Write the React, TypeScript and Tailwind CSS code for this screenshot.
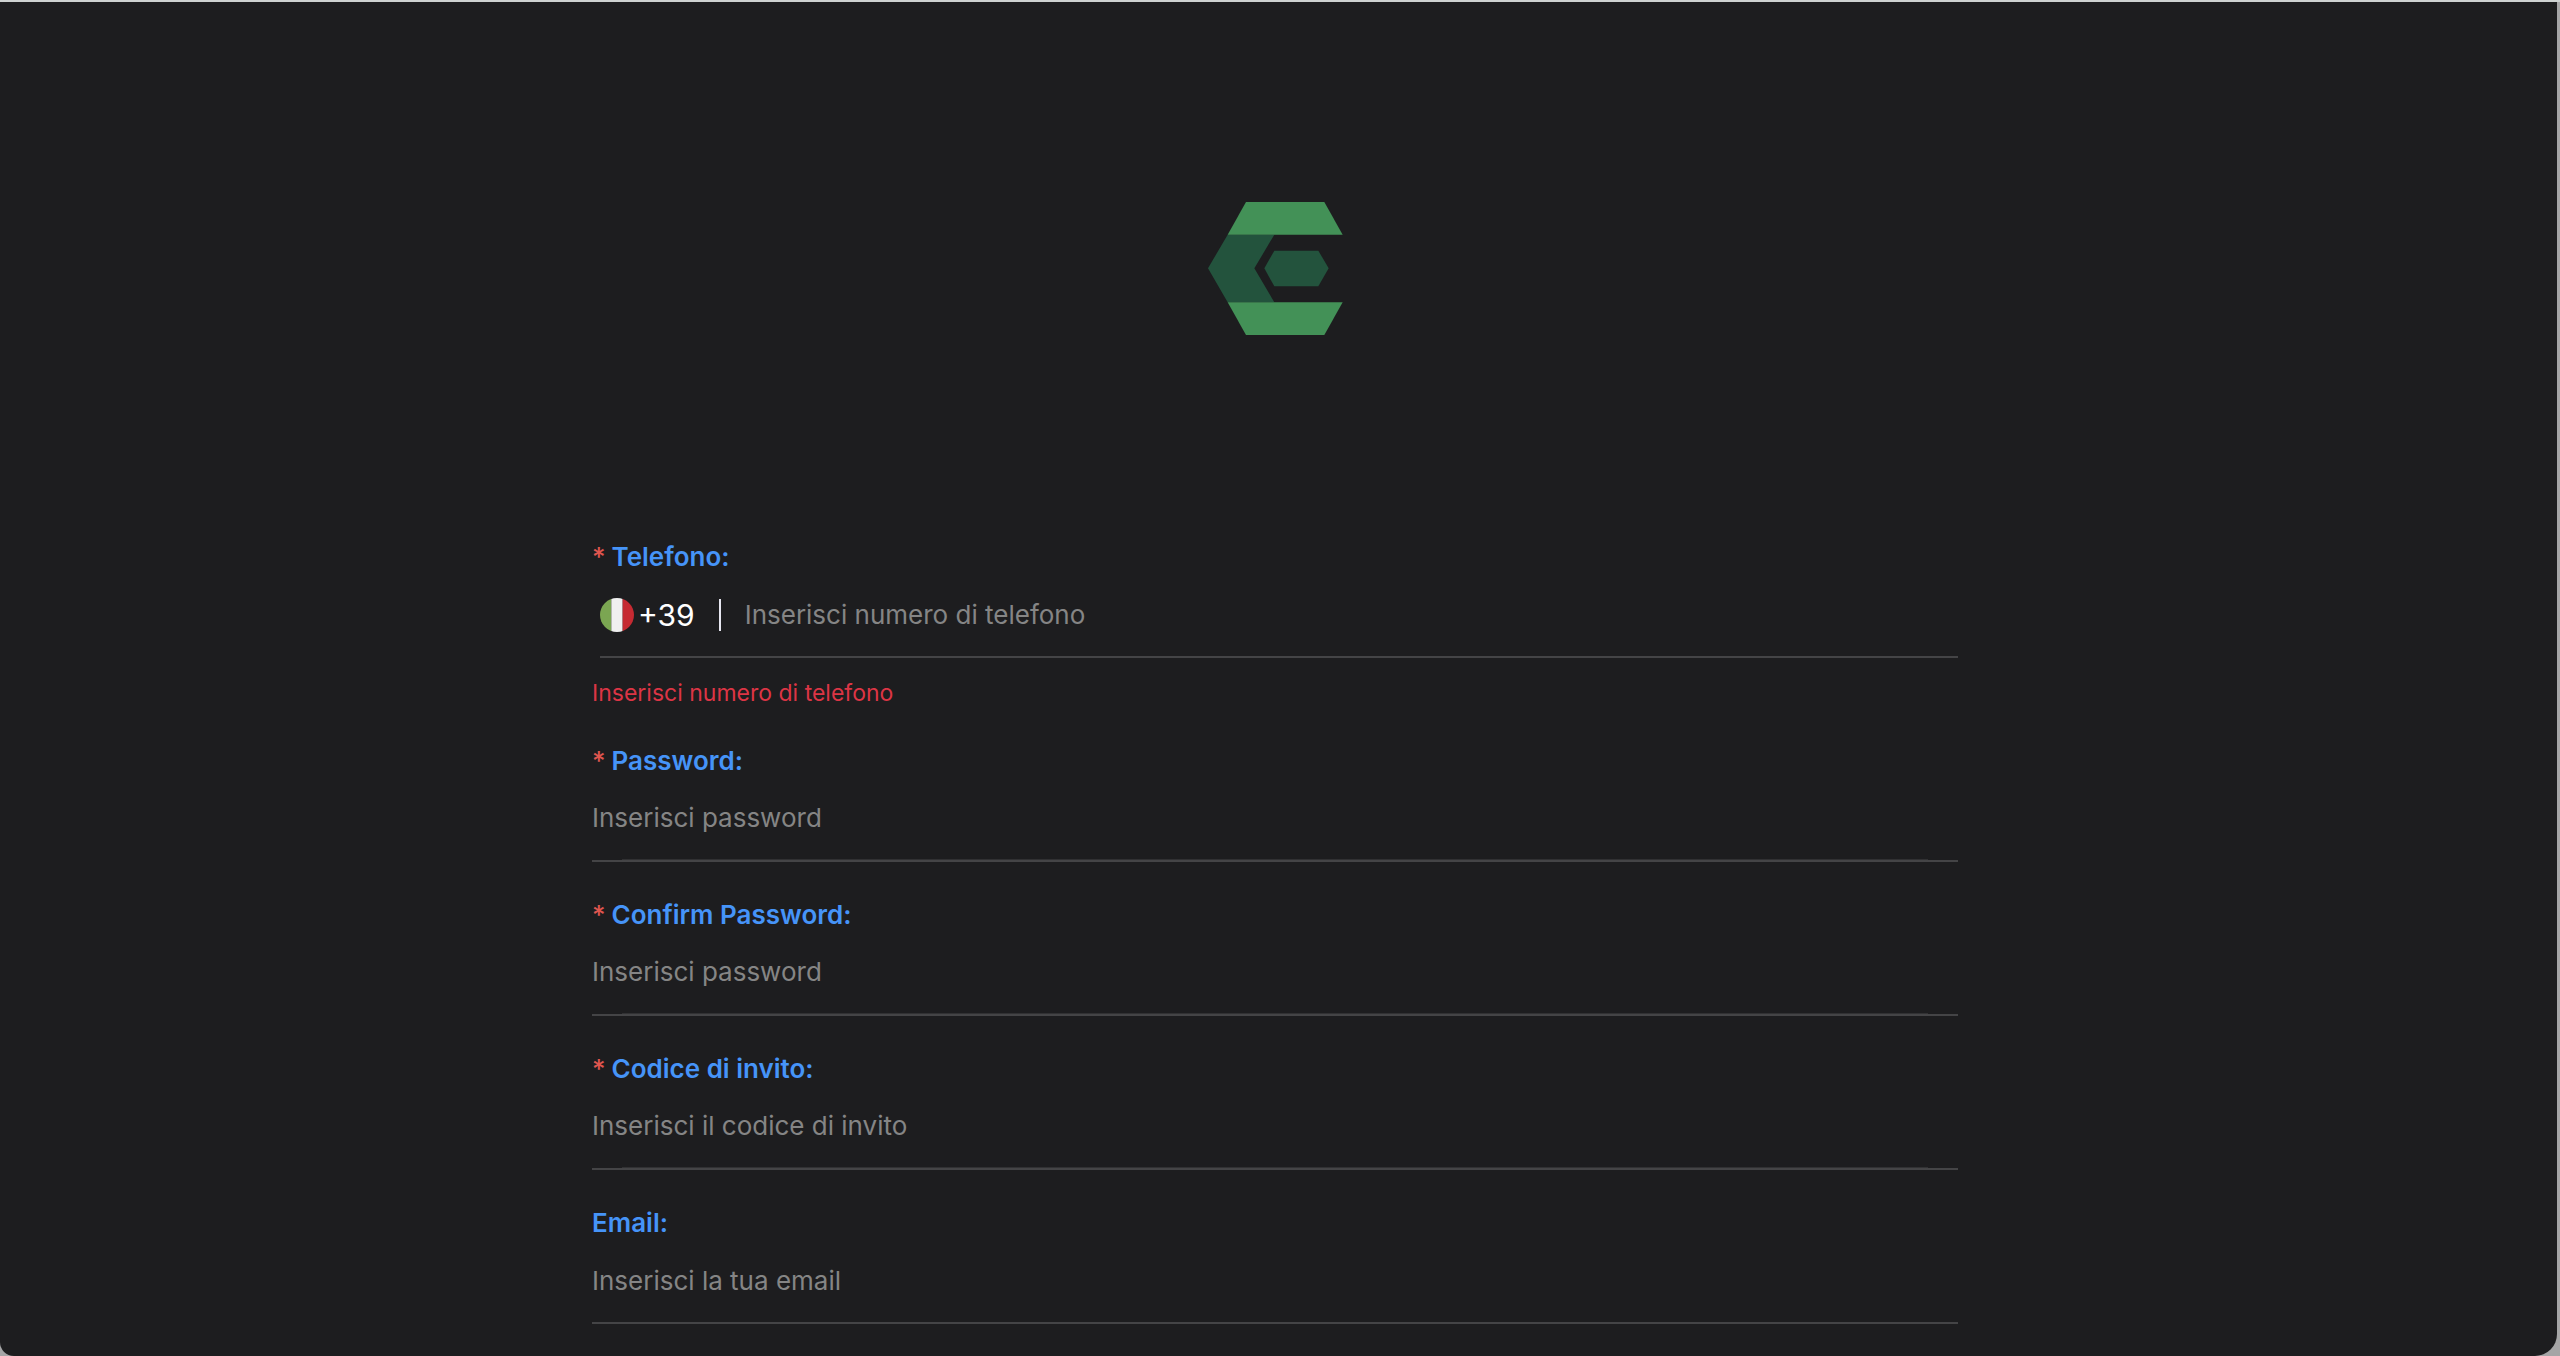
import { useState } from "react";
import type { HTMLInputTypeAttribute } from "react";

type FieldProps = {
  id: string;
  label: string;
  placeholder: string;
  type?: HTMLInputTypeAttribute;
  required?: boolean;
};

const inputClass =
  "min-w-0 flex-1 bg-transparent text-[26px] leading-8 text-white placeholder:text-[#858585] outline-none";

function FieldLabel({ id, label, required }: { id: string; label: string; required?: boolean }) {
  return (
    <label htmlFor={id} className="flex gap-[6px] text-[26px] font-semibold leading-8 text-[#4694f8]">
      {required && <span className="font-medium text-[#e0564f]">*</span>}
      {label}
    </label>
  );
}

function Field({ id, label, placeholder, type = "text", required }: FieldProps) {
  const [value, setValue] = useState("");

  return (
    <div>
      <FieldLabel id={id} label={label} required={required} />
      <div className="flex h-[85px] flex-col border-b-2 border-[#444446]">
        <input
          id={id}
          type={type}
          value={value}
          onChange={(e) => setValue(e.target.value)}
          placeholder={placeholder}
          className={inputClass}
        />
        {required && <div className="mx-[30px] h-px bg-[#313133]" />}
      </div>
    </div>
  );
}

function Logo() {
  return (
    <svg viewBox="84 65 405 399" className="h-[133px] w-[135px]" aria-hidden="true">
      <path d="M143 163H283L223 264L283 366H143L84 264Z" fill="#23533d" />
      <path d="M198 65H433L488 163H143Z" fill="#439157" />
      <path d="M143 366H488L433 464H198Z" fill="#439157" />
      <path d="M253 264L283 211H415L446 264L415 318H283Z" fill="#23533d" />
    </svg>
  );
}

function ItalyFlag() {
  return (
    <svg viewBox="0 0 36 36" className="size-[34px]" aria-hidden="true">
      <defs>
        <clipPath id="flag-circle">
          <circle cx="18" cy="18" r="18" />
        </clipPath>
      </defs>
      <g clipPath="url(#flag-circle)">
        <path d="M0 0H12V36H0Z" fill="#7ba652" />
        <path d="M12 0H24V36H12Z" fill="#f0f0f0" />
        <path d="M24 0H36V36H24Z" fill="#c62a32" />
      </g>
    </svg>
  );
}

export default function App() {
  const [phone, setPhone] = useState("");

  return (
    <div className="flex min-h-screen flex-col border-t-2 border-[#ced2d1] bg-[#a5a5a6] pr-[3px] font-['Inter',sans-serif]">
      <main className="flex flex-1 flex-col items-center rounded-bl-[14px] rounded-br-[22px] bg-[#1d1d1f] pr-[7px] pt-[200px]">
        <Logo />

        <form className="mt-[206px] flex w-full max-w-[1366px] flex-col gap-[37px]">
          {/* Phone */}
          <div>
            <FieldLabel id="phone" label="Telefono:" required />
            <div className="ml-2 flex h-[85px] items-center border-b-2 border-[#444446]">
              <button type="button" className="flex items-center gap-1 text-[30px] leading-8 text-white">
                <ItalyFlag />
                +39
              </button>
              <div className="ml-6 mr-6 h-8 w-[2px] bg-[#e6e6f0]" />
              <input
                id="phone"
                type="tel"
                value={phone}
                onChange={(e) => setPhone(e.target.value)}
                placeholder="Inserisci numero di telefono"
                className={inputClass}
              />
            </div>
            <p className="mt-5 text-[23px] leading-[30px] text-[#dc3545]">
              Inserisci numero di telefono
            </p>
          </div>

          <Field id="password" label="Password:" placeholder="Inserisci password" type="password" required />
          <Field id="confirm" label="Confirm Password:" placeholder="Inserisci password" type="password" required />
          <Field id="invite" label="Codice di invito:" placeholder="Inserisci il codice di invito" required />
          <Field id="email" label="Email:" placeholder="Inserisci la tua email" type="email" />
        </form>
      </main>
    </div>
  );
}
